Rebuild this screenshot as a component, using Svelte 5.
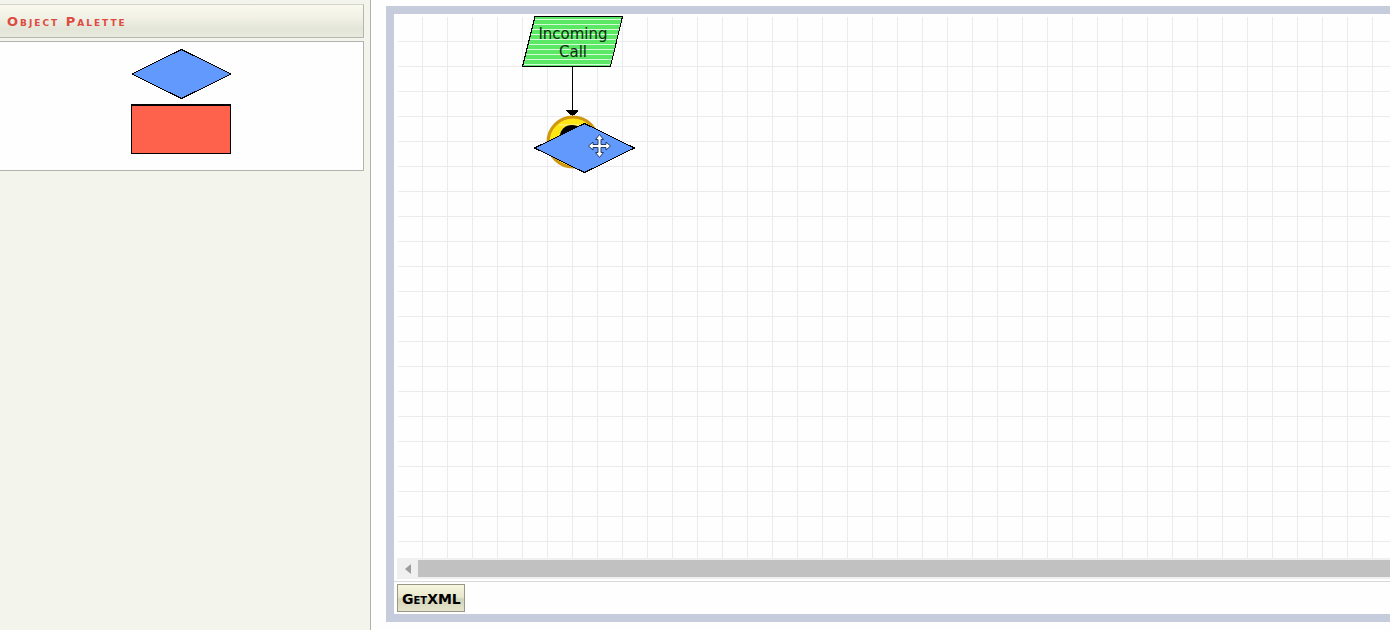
<script>
  const title = 'Object Palette';
</script>

<div class="app">
  <aside class="sidebar">
    <h2>{title}</h2>
    <div class="palette">
      <button class="shape" aria-label="Decision">
        <svg width="102" height="52" viewBox="0 0 102 52" shape-rendering="crispEdges">
          <path d="M2 26 51.500 1.500 101 26 51.500 50.500Z" fill="#6199fd" stroke="#000" />
        </svg>
      </button>
      <button class="shape" aria-label="Process">
        <svg width="102" height="52" viewBox="0 0 102 52" shape-rendering="crispEdges">
          <path d="M1 1H101V51H1Z" />
          <path d="M2 3H100V50H2Z" fill="#ff624c" />
        </svg>
      </button>
    </div>
  </aside>

  <main class="editor">
    <div class="canvas">
      <div class="node start">
        <svg width="102" height="52" viewBox="0 0 102 52">
          <defs>
            <pattern id="stripes" width="5" height="5" patternUnits="userSpaceOnUse">
              <rect width="5" height="5" fill="#5be864" />
              <rect y="4" width="5" height="1" fill="#d7fada" />
            </pattern>
          </defs>
          <path d="M13 1.500H100.500L88.500 51.500H.5Z" fill="url(#stripes)" stroke="#000" shape-rendering="crispEdges" />
        </svg>
        <span>Incoming<br />Call</span>
      </div>
      <svg class="node link" width="14" height="52" viewBox="0 0 14 52" shape-rendering="crispEdges">
        <path d="M7 0H8V52H7Z" />
        <path d="M1 44H13V45L9 49H5L1 45Z" />
      </svg>
      <svg class="node end" width="54" height="54" viewBox="0 0 54 54">
        <circle cx="27" cy="27" r="25" fill="#ffe715" stroke="#cf980f" stroke-width="3" />
        <path d="M13 10H41" stroke="#fff5a0" />
        <ellipse cx="26" cy="21" rx="12" ry="11" />
      </svg>
      <svg class="node dragged" width="102" height="52" viewBox="0 0 102 52">
        <path d="M1.500 26 51.500 1.500 101.500 26 51.500 50.500Z" fill="#6199fd" stroke="#000" shape-rendering="crispEdges" />
        <path d="M66.500 12.500 70.500 17.500H68V22.500H73V20L77.500 24 73 28V25.500H68V30.500H70.500L66.500 35.500 62.500 30.500H65V25.500H60V28L55.500 24 60 20V22.500H65V17.500H62.500Z" fill="#fff" stroke="#233b69" />
      </svg>
    </div>
    <div class="scroll">
      <button aria-label="Scroll left"><svg width="6" height="10" viewBox="0 0 6 10"><path d="M0 5 6 0V10Z" fill="#9d9d9d" /></svg></button>
      <div class="thumb"></div>
    </div>
    <div class="toolbar"><button>GetXML</button></div>
  </main>
</div>

<style>
  :global(body) { margin: 0; background: #fefefe; }
  .app {
    display: flex;
    min-height: 100vh;
    overflow: hidden;
    font-family: "DejaVu Sans", sans-serif;
  }
  .sidebar {
    box-sizing: border-box;
    flex: 0 0 371px;
    padding: 4px 6px 0 0;
    border-right: 1px solid #b0b0ae;
    background: #f3f5ec;
  }
  h2 {
    box-sizing: border-box;
    height: 34px;
    margin: 0 0 3px;
    padding-left: 7px;
    border: 1px solid #b5b6ae;
    border-top-color: #d2d3cd;
    border-left: 0;
    background: linear-gradient(#faf9ee, #f1f1e6 40%, #e3e5d8 75%, #e8eadd);
    color: #dd4b40;
    font: bold 13px/34px "DejaVu Sans", sans-serif;
    font-variant: small-caps;
    letter-spacing: 2px;
  }
  .palette {
    display: flex;
    flex-direction: column;
    align-items: center;
    gap: 3px;
    padding: 6px 2px 15px 0;
    border: 1px solid #b2b3af;
    border-left: 0;
    background: #fefefe;
  }
  button { padding: 0; border: 0; background: none; }
  svg { display: block; }
  .shape { cursor: move; }
  .editor {
    flex: 1;
    min-width: 0;
    display: flex;
    flex-direction: column;
    margin: 6px 0 8px 15px;
    border: 8px solid #c6ccdc;
    border-right: 0;
  }
  .canvas {
    position: relative;
    flex: 1;
    margin: 2px 0 0 3px;
    background:
      linear-gradient(90deg, transparent 24px, #ebebed 24px) 1px 0 / 25px 25px,
      linear-gradient(transparent 24px, #ebebed 24px) 0 1px / 25px 25px;
    box-shadow: inset 1px 1px #fefefe;
  }
  .node { position: absolute; }
  .start { left: 125px; top: -1px; }
  .start span {
    position: absolute;
    inset: 10px 0 0;
    text-align: center;
    font-size: 15px;
    line-height: 18px;
    color: #122b14;
  }
  .link { left: 168px; top: 50px; }
  .end { left: 149px; top: 99px; }
  .dragged { left: 136px; top: 106px; }
  .scroll {
    display: flex;
    margin-left: 3px;
    padding: 2px 0;
    background: #f0f0f0;
  }
  .scroll button {
    display: grid;
    place-items: center;
    width: 21px;
    height: 17px;
  }
  .thumb { flex: 1; background: #c1c1c2; }
  .toolbar {
    margin-top: 2px;
    padding: 2px 3px;
    border-top: 1px solid #d9d9dc;
  }
  .toolbar button {
    display: block;
    height: 28px;
    padding: 2px 3px 0 4px;
    border: 1px solid #98978a;
    background: linear-gradient(#f7f6dc, #e8e8d0 45%, #d3d5b8 55%, #e4e4cc);
    font: bold 14px "DejaVu Sans", sans-serif;
    font-variant: small-caps;
    color: #000;
  }
</style>
